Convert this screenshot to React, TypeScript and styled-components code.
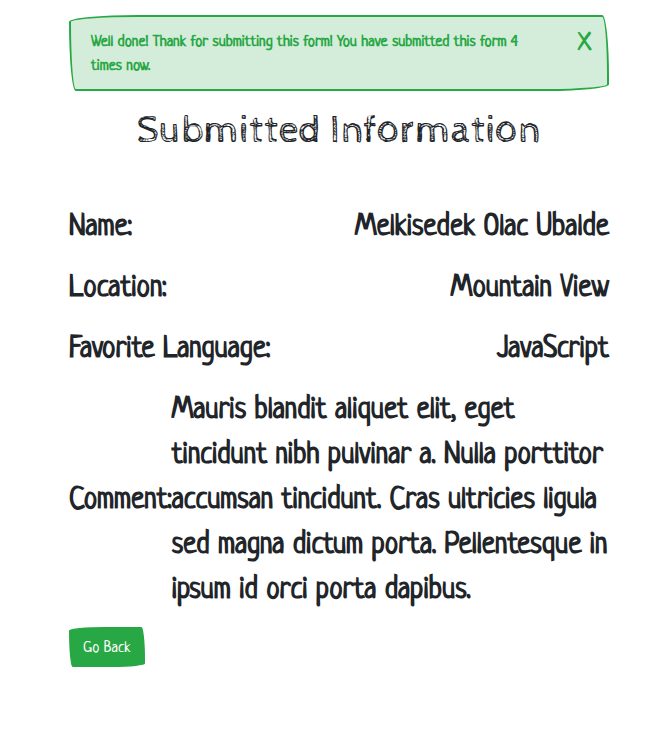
import React from "react";
import styled, { createGlobalStyle } from "styled-components";

const GlobalStyle = createGlobalStyle`
  *, *::before, *::after { box-sizing: border-box; }
  body {
    margin: 0;
    background: #fff;
    color: #212529;
    font-family: Neucha, "Open Sans", sans-serif;
    font-size: 16px;
    font-weight: 400;
    line-height: 1.5;
  }
`;

const sketchRadius = "255px 25px 225px 25px / 25px 225px 25px 255px";

const Container = styled.main`
  width: 540px;
  margin: 0 0 0 69px;
  padding-top: 15px;
`;

const Alert = styled.div`
  display: flex;
  justify-content: space-between;
  align-items: flex-start;
  height: 76px;
  padding: 14px 16px 10px 20px;
  border: 2px solid #28a745;
  border-radius: ${sketchRadius};
  background: #d4edda;
  color: #28a745;
  font-weight: 700;
`;

const AlertText = styled.span`
  width: 452px;
`;

const Close = styled.button`
  padding: 2px 0 0;
  border: 0;
  background: transparent;
  color: inherit;
  font: inherit;
  font-size: 24px;
  line-height: 24px;
`;

const Title = styled.h1`
  margin: 16px 0 48px;
  font-family: "Cabin Sketch", "Open Sans", sans-serif;
  font-size: 40px;
  font-weight: 400;
  line-height: 48px;
  text-align: center;
`;

const Details = styled.section`
  padding-top: 3px;
  margin-bottom: 13px;
  display: grid;
  gap: 16px;
`;

const Row = styled.div`
  display: flex;
  justify-content: space-between;
  align-items: center;
  font-size: 30px;
  font-weight: 700;
  line-height: 45px;
`;

const Button = styled.button`
  display: block;
  height: 40px;
  padding: 8px 12px 4px;
  border: 2px solid #28a745;
  border-radius: ${sketchRadius};
  background: #28a745;
  color: #fff;
  font: inherit;
`;

const details = [
  { label: "Name:", value: "Melkisedek Olac Ubalde" },
  { label: "Location:", value: "Mountain View" },
  { label: "Favorite Language:", value: "JavaScript" },
  {
    label: "Comment:",
    value:
      "Mauris blandit aliquet elit, eget tincidunt nibh pulvinar a. Nulla porttitor accumsan tincidunt. Cras ultricies ligula sed magna dictum porta. Pellentesque in ipsum id orci porta dapibus.",
  },
];

export default function App() {
  return (
    <>
      <GlobalStyle />
      <Container>
        <Alert role="alert">
          <AlertText>
            Well done! Thank for submitting this form! You have submitted this form 4 times now.
          </AlertText>
          <Close type="button" aria-label="Close">X</Close>
        </Alert>
        <Title>Submitted Information</Title>
        <Details>
          {details.map((d) => (
            <Row key={d.label}>
              <span>{d.label}</span>
              <span>{d.value}</span>
            </Row>
          ))}
        </Details>
        <Button type="button">Go Back</Button>
      </Container>
    </>
  );
}
